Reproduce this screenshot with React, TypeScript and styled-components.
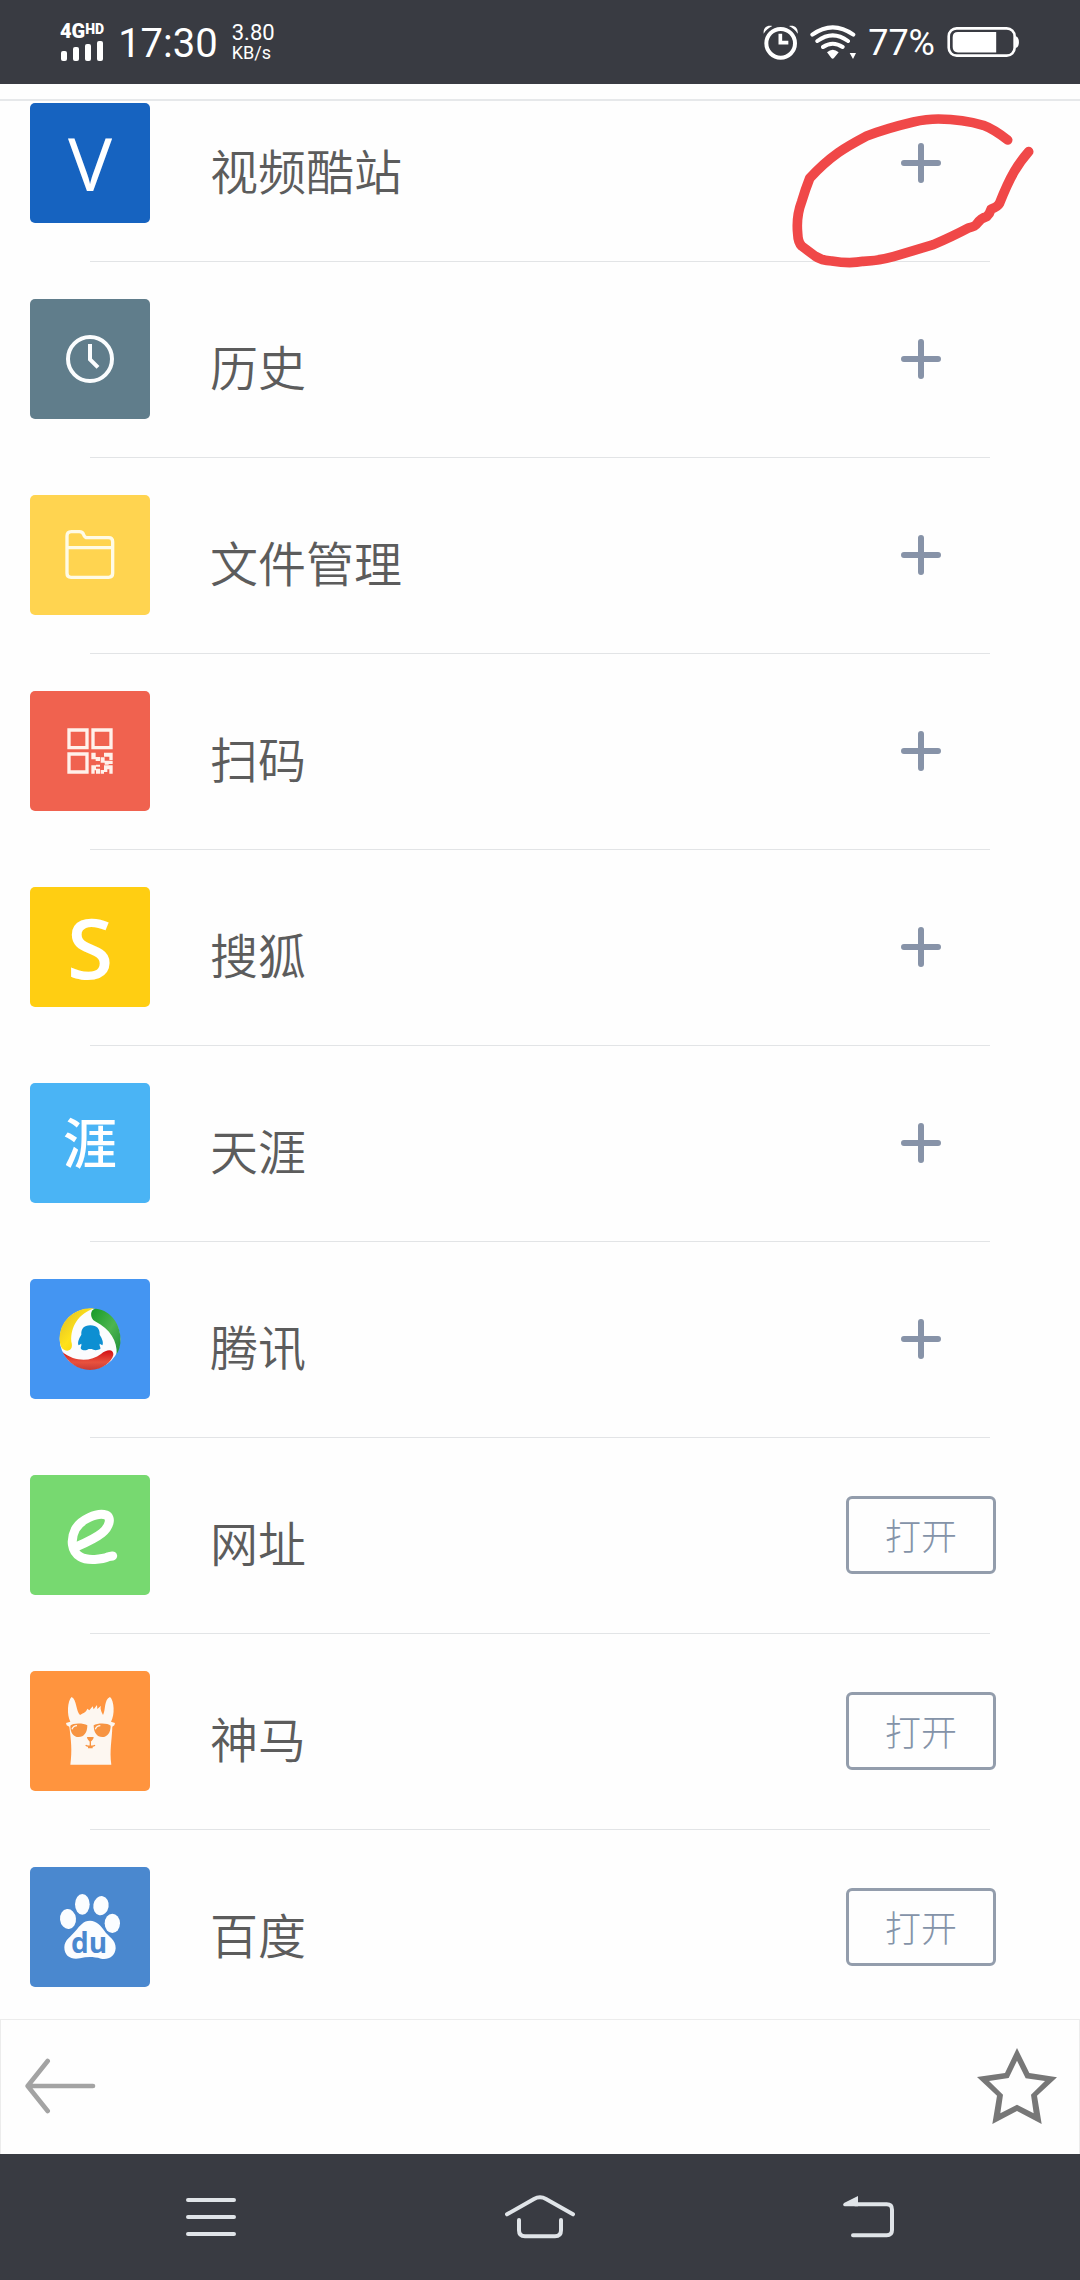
import React from 'react';
import styled, { createGlobalStyle } from 'styled-components';

const GlobalStyle = createGlobalStyle`
  *, *::before, *::after { box-sizing: border-box; }
  body {
    margin: 0;
    background: #fefefe;
    font-family: "Noto Sans CJK SC", "Noto Sans", sans-serif;
  }
`;

const Screen = styled.div`
  display: flex;
  flex-direction: column;
  min-height: 100vh;
`;

const BareButton = styled.button`
  display: flex;
  align-items: center;
  justify-content: center;
  padding: 0;
  border: 0;
  background: none;
  cursor: pointer;
`;

/* ---------- status bar ---------- */

const StatusBar = styled.header`
  display: flex;
  align-items: center;
  justify-content: space-between;
  height: 84px;
  padding: 0 60px;
  background: #393b42;
  color: #fff;
  font-family: Roboto, sans-serif;
`;

const StatusGroup = styled.div<{ $gap: number }>`
  display: flex;
  align-items: center;
  gap: ${(p) => p.$gap}px;
`;

const Signal = styled.div`
  display: flex;
  flex-direction: column;
  gap: 2px;
`;

const Network = styled.div`
  display: flex;
  align-items: flex-start;
  font-size: 20px;
  font-weight: 900;
  line-height: 16px;
`;

const Hd = styled.span`
  font-size: 14px;
  line-height: 12px;
`;

const Clock = styled.time`
  font-size: 40px;
  line-height: 48px;
  padding-top: 4px;
`;

const Speed = styled.div`
  display: flex;
  flex-direction: column;
  padding-top: 2px;
  font-size: 22px;
  line-height: 20px;
`;

const SpeedUnit = styled.span`
  font-size: 18px;
`;

const Percent = styled.span`
  padding-top: 2px;
  font-size: 36px;
  line-height: 44px;
`;

/* ---------- site list ---------- */

const TopEdge = styled.div`
  height: 17px;
  border-bottom: 2px solid #e6e8ea;
`;

const List = styled.ul`
  flex: 1;
  margin: 0;
  padding: 2px 0 32px;
  list-style: none;
`;

const Item = styled.li`
  & + &::before {
    content: "";
    display: block;
    height: 1px;
    margin: 38px 90px 37px;
    background: #e2e4e6;
  }
`;

const Row = styled.div`
  display: flex;
  align-items: center;
  gap: 60px;
  padding: 0 84px 0 30px;
`;

const Tile = styled.div<{ $color: string }>`
  display: flex;
  flex: none;
  align-items: center;
  justify-content: center;
  width: 120px;
  height: 120px;
  border-radius: 5px;
  background: ${(p) => p.$color};
  color: #fff;
`;

const TileLetter = styled.span<{ $size: number; $weight: number }>`
  font-family: "Open Sans", "Noto Sans CJK SC", sans-serif;
  font-size: ${(p) => p.$size}px;
  font-weight: ${(p) => p.$weight};
  line-height: 120px;
`;

const Label = styled.span`
  flex: 1;
  padding-top: 12px;
  color: #5c5c5c;
  font-size: 48px;
  font-weight: 350;
  line-height: 72px;
`;

const Action = styled.div`
  position: relative;
  display: flex;
  justify-content: center;
  width: 150px;
`;

const AddButton = styled(BareButton)`
  width: 80px;
  height: 80px;
`;

const OpenButton = styled(BareButton)`
  width: 150px;
  height: 78px;
  padding-bottom: 2px;
  border: 3px solid #939dac;
  border-radius: 6px;
  color: #8493a8;
  font-family: inherit;
  font-size: 36px;
  font-weight: 300;
  line-height: 52px;
`;

const Scribble = styled.svg`
  position: absolute;
  top: -13px;
  left: -56px;
  width: 247px;
  height: 160px;
  pointer-events: none;
`;

/* ---------- bottom bars ---------- */

const Toolbar = styled.footer`
  display: flex;
  align-items: center;
  justify-content: space-between;
  height: 135px;
  padding: 0 22px 2px 24px;
  border: 1px solid #ececec;
  border-bottom: 0;
`;

const SystemNav = styled.nav`
  display: flex;
  align-items: center;
  justify-content: space-between;
  height: 126px;
  padding: 0 186px;
  background: #393b42;
`;

/* ---------- drawings ---------- */

const tile = (y: number) => ({ width: 120, height: 120, viewBox: `90 ${y} 360 360`, fill: 'none', 'aria-hidden': true });

const HistoryIcon = () => (
  <svg {...tile(57)} stroke="#fbfdfe" strokeWidth="12">
    <circle cx="270" cy="237" r="66" />
    <path d="M270 192V238L294 262" />
  </svg>
);

const FolderIcon = () => (
  <svg {...tile(645)} stroke="#fffbe6" strokeWidth="10">
    <path d="M201 768Q201 755 214 755H238Q248 755 251 764Q254 773 262 773H326Q338 773 338 785V880Q338 892 326 892H213Q201 892 201 880ZM201 803H338" />
  </svg>
);

const ScanIcon = () => (
  <svg {...tile(63)} stroke="#fff1ea" strokeWidth="10">
    <path d="M207 180H261V233H207ZM279 180H333V233H279ZM207 252H261V306H207Z" />
    <path
      stroke="none"
      fill="#fff1ea"
      d="M274 248H287V261H300V273H287V268H274ZM312 248H338V270H328V260H312ZM302 262H314V272H326V284H314V278H302ZM326 272H338V282H326ZM274 286H288V296H300V311H288V301H284V311H274ZM288 284H300V290H288ZM312 286H338V311H328V298H322V306H312ZM302 300H312V311H302Z"
    />
  </svg>
);

const TencentIcon = () => (
  <svg {...tile(657)}>
    <defs>
      <linearGradient id="txYellow" x1="0" y1="0" x2="1" y2="1">
        <stop offset="0" stopColor="#d9b92a" />
        <stop offset=".5" stopColor="#ffe21a" />
        <stop offset="1" stopColor="#f0c800" />
      </linearGradient>
      <linearGradient id="txGreen" x1="0" y1="0" x2="1" y2="1">
        <stop offset="0" stopColor="#159a28" />
        <stop offset=".55" stopColor="#4db54f" />
        <stop offset="1" stopColor="#1f8f3a" />
      </linearGradient>
      <linearGradient id="txRed" x1="0" y1="0" x2="0" y2="1">
        <stop offset="0" stopColor="#d30f14" />
        <stop offset=".6" stopColor="#e8523e" />
        <stop offset="1" stopColor="#c93a35" />
      </linearGradient>
    </defs>
    <circle cx="270" cy="837" r="91" fill="#fbfcfe" />
    <path fill="url(#txYellow)" d="M284 745C225 740 178 782 179 838C180 864 190 872 202 872C216 870 218 858 214 845C211 800 236 760 284 745Z" />
    <path fill="url(#txGreen)" d="M288 746C335 750 367 800 361 850C359 866 355 875 350 882C352 845 332 808 285 784C268 774 270 745 288 746Z" />
    <path fill="url(#txRed)" d="M188 877C225 906 272 906 303 882C322 866 342 868 340 885C335 905 310 929 270 930C233 930 203 907 188 877Z" />
    <path fill="#0d8fd2" d="M271 796C291 796 300 807 299 824C308 838 311 850 307 856L299 851C297 857 303 862 301 867C292 872 280 871 276 867H266C260 872 248 872 243 867C240 862 246 857 244 851L236 856C232 850 235 838 244 824C243 807 251 796 271 796Z" />
  </svg>
);

const WebsiteIcon = () => (
  <svg {...tile(75)} stroke="#fff" strokeWidth="27" strokeLinecap="round" strokeLinejoin="round">
    <path d="M230 290C262 276 290 262 306 249C327 232 337 203 318 195C292 186 240 210 226 238C211 268 213 304 240 320C262 334 308 328 326 320L338 318" />
  </svg>
);

const LlamaIcon = () => (
  <svg {...tile(663)}>
    <path
      fill="#fdf7f1"
      d="M215 741C230 747 228 785 240 795C248 789 258 788 262 776L268 781L278 769L281 778L291 765L292 777L303 767C299 778 306 787 309 795C317 782 312 747 330 741C343 752 345 795 333 815L345 819L343 826L337 830C336 870 328 900 334 944H211C217 900 213 870 208 830L200 826L198 819L211 815C200 795 202 752 215 741Z"
    />
    <path fill="#f79442" d="M211 827C218 819 250 819 262 826C262 848 252 861 236 861C220 861 211 848 211 827ZM281 826C292 819 324 819 332 827C332 848 322 861 307 861C291 861 281 848 281 826ZM261 861H281C281 868 276 872 271 876C266 872 261 868 261 861Z" />
    <path stroke="#fdf7f1" strokeWidth="4" d="M216 838Q220 827 231 827M286 838Q290 827 301 827" />
    <path stroke="#f79442" strokeWidth="4" d="M271 874V887M257 886Q262 890 271 888Q280 890 285 886M264 893H278" />
  </svg>
);

const DuText = styled.text`
  font-family: "Open Sans", sans-serif;
  font-size: 84px;
  font-weight: 700;
`;

const BaiduIcon = () => (
  <svg {...tile(81)} fill="#fbfdff">
    <ellipse cx="204" cy="237" rx="24" ry="30" transform="rotate(-6 204 237)" />
    <ellipse cx="247" cy="193" rx="22" ry="31" />
    <ellipse cx="303" cy="197" rx="23" ry="29" transform="rotate(10 303 197)" />
    <ellipse cx="337" cy="250" rx="23" ry="29" />
    <path d="M270 242C290 242 303 258 313 272C325 290 348 299 347 325C345 350 325 360 303 356C280 350 262 350 240 355C215 360 193 350 193 322C193 299 213 290 227 272C240 257 250 242 270 242Z" />
    <DuText x="267" y="338" textAnchor="middle" fill="#4a88cf">du</DuText>
  </svg>
);

const PlusIcon = () => (
  <svg width="40" height="40" viewBox="0 0 40 40" stroke="#8793a8" strokeWidth="6" strokeLinecap="round" aria-hidden>
    <path d="M3 20H37M20 3V37" />
  </svg>
);

const SignalBars = () => (
  <svg width="43" height="20" viewBox="0 0 43 20" fill="#fff" aria-hidden>
    <rect x="1" y="10" width="6" height="10" rx="2" />
    <rect x="13" y="6" width="6" height="14" rx="2" />
    <rect x="25" y="3" width="6" height="17" rx="2" />
    <rect x="37" y="0" width="6" height="20" rx="2" />
  </svg>
);

const AlarmIcon = () => (
  <svg width="35" height="35" viewBox="184 74 105 105" fill="none" stroke="#fff" aria-label="闹钟">
    <circle cx="237" cy="129" r="43" strokeWidth="12" />
    <path strokeWidth="11" d="M236 100V127H260" />
    <path fill="#fff" stroke="none" d="M186 100C184 82 196 73 212 77C201 82 192 90 186 100ZM288 100C290 82 278 73 262 77C273 82 282 90 288 100Z" />
  </svg>
);

const WifiIcon = () => (
  <svg width="46" height="34" viewBox="326 73 138 102" fill="none" stroke="#fff" strokeWidth="12" strokeLinecap="round" aria-label="无线网络">
    <path d="M333 102Q394 58 456 102M348 121Q394 87 440 121M365 139Q394 119 424 139" />
    <path fill="#fff" stroke="none" d="M377 155Q394 140 412 155L398 172Q394 176 390 172ZM445 157H464L455 175Z" />
  </svg>
);

const BatteryIcon = () => (
  <svg width="73" height="30" viewBox="743 80 219 91" fill="none" aria-label="电量">
    <rect x="747" y="84" width="200" height="83" rx="24" stroke="#fff" strokeWidth="8" />
    <path fill="#fff" d="M775 95H891V157H775Q759 157 759 141V111Q759 95 775 95ZM951 108Q960 112 960 126Q960 140 951 144Z" />
  </svg>
);

const ArrowIcon = () => (
  <svg width="71" height="56" viewBox="77 656 213 168" fill="none" stroke="#a3a3a3" strokeWidth="14" strokeLinecap="round" strokeLinejoin="round" aria-hidden>
    <path d="M145 665L85 740L145 815M90 740H281" />
  </svg>
);

const StarIcon = () => (
  <svg width="80" height="76" viewBox="711 561 240 228" aria-hidden>
    <path
      fill="#777"
      fillRule="evenodd"
      d="M831 561L868 636L951 649L891 704L905 789L831 750L757 789L771 704L711 648L795 636ZM831 599L806 651L747 660L789 701L781 757L831 731L881 757L873 701L915 660L857 652Z"
    />
  </svg>
);

const MenuIcon = () => (
  <svg width="50" height="38" viewBox="0 0 50 38" stroke="#e0e4e8" strokeWidth="4" strokeLinecap="round" aria-hidden>
    <path d="M2 2H48M2 19H48M2 36H48" />
  </svg>
);

const HomeIcon = () => (
  <svg width="70" height="44" viewBox="318 644 210 132" fill="none" stroke="#e0e4e8" strokeWidth="12" strokeLinecap="round" aria-hidden>
    <path d="M324 702L405 656Q423 646 441 656L522 702M360 719V750Q360 768 378 768H468Q486 768 486 750V719" />
  </svg>
);

const ReturnIcon = () => (
  <svg width="51" height="42" viewBox="309 1004 153 126" fill="none" stroke="#e0e4e8" strokeWidth="12" strokeLinecap="round" aria-hidden>
    <path d="M339 1122H440Q456 1122 456 1106V1045Q456 1029 440 1029H345" />
    <path fill="#e0e4e8" stroke="none" d="M354 1004V1035H314Q306 1032 312 1025Z" />
  </svg>
);

const Circled = () => (
  <Scribble viewBox="270 330 741 480" fill="none" stroke="#f04848" strokeWidth="29" strokeLinecap="round" strokeLinejoin="round" aria-hidden>
    <path d="M923 420Q880 387 850 376Q790 358 715 357Q680 357 640 366Q560 385 500 408Q440 440 415 458Q370 490 329 535Q317 565 305 605Q288 650 293 700Q294 727 305 738L345 768Q365 782 395 783Q450 792 490 784Q540 782 580 770L700 734Q760 708 805 684Q825 680 831 671Q842 655 860 650Q870 640 873 628Q893 620 898 611Q922 550 943 514Q960 485 986 455" />
  </Scribble>
);

interface Site {
  name: string;
  color: string;
  art: React.ReactNode;
  added?: boolean;
  circled?: boolean;
}

const sites: Site[] = [
  { name: '视频酷站', color: '#1663c0', art: <TileLetter $size={74} $weight={500}>V</TileLetter>, circled: true },
  { name: '历史', color: '#607d8b', art: <HistoryIcon /> },
  { name: '文件管理', color: '#ffd450', art: <FolderIcon /> },
  { name: '扫码', color: '#f0624f', art: <ScanIcon /> },
  { name: '搜狐', color: '#ffce12', art: <TileLetter $size={84} $weight={600}>S</TileLetter> },
  { name: '天涯', color: '#4ab4f5', art: <TileLetter $size={54} $weight={500}>涯</TileLetter> },
  { name: '腾讯', color: '#4495f2', art: <TencentIcon /> },
  { name: '网址', color: '#77d970', art: <WebsiteIcon />, added: true },
  { name: '神马', color: '#ff943e', art: <LlamaIcon />, added: true },
  { name: '百度', color: '#4a88cf', art: <BaiduIcon />, added: true },
];

export default function App() {
  return (
    <Screen>
      <GlobalStyle />
      <StatusBar>
        <StatusGroup $gap={14}>
          <Signal>
            <Network>4G<Hd>HD</Hd></Network>
            <SignalBars />
          </Signal>
          <Clock>17:30</Clock>
          <Speed>
            3.80
            <SpeedUnit>KB/s</SpeedUnit>
          </Speed>
        </StatusGroup>
        <StatusGroup $gap={12}>
          <AlarmIcon />
          <WifiIcon />
          <Percent>77%</Percent>
          <BatteryIcon />
        </StatusGroup>
      </StatusBar>
      <TopEdge />
      <List>
        {sites.map((site) => (
          <Item key={site.name}>
            <Row>
              <Tile $color={site.color}>{site.art}</Tile>
              <Label>{site.name}</Label>
              <Action>
                {site.added ? (
                  <OpenButton type="button">打开</OpenButton>
                ) : (
                  <AddButton type="button" aria-label={`添加${site.name}`}>
                    <PlusIcon />
                  </AddButton>
                )}
                {site.circled && <Circled />}
              </Action>
            </Row>
          </Item>
        ))}
      </List>
      <Toolbar>
        <BareButton type="button" aria-label="后退"><ArrowIcon /></BareButton>
        <BareButton type="button" aria-label="收藏"><StarIcon /></BareButton>
      </Toolbar>
      <SystemNav>
        <BareButton type="button" aria-label="菜单"><MenuIcon /></BareButton>
        <BareButton type="button" aria-label="主页"><HomeIcon /></BareButton>
        <BareButton type="button" aria-label="返回"><ReturnIcon /></BareButton>
      </SystemNav>
    </Screen>
  );
}
